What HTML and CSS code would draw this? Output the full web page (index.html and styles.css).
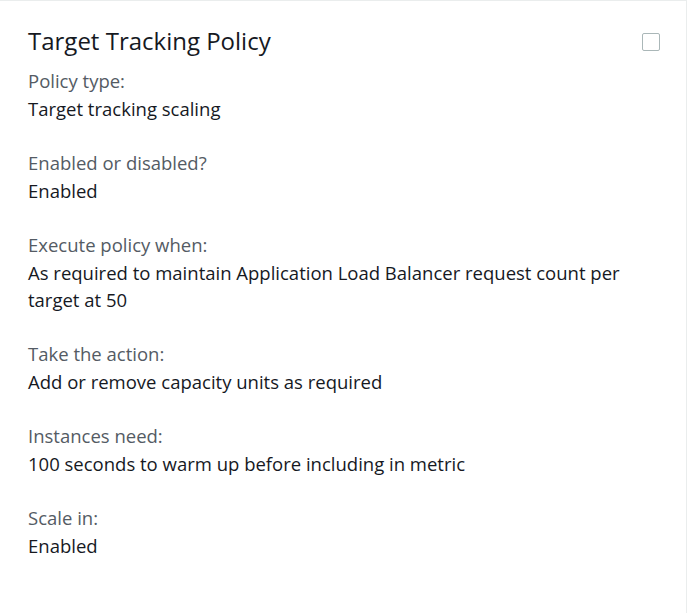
FILE: index.html
```html
<!DOCTYPE html>
<html>
<head>
<meta charset="utf-8">
<link rel="stylesheet" href="styles.css">
</head>
<body>
<div class="card">
  <div class="header">
    <h2 class="title">Target Tracking Policy</h2>
    <span class="checkbox"></span>
  </div>
  <div class="field">
    <div class="label">Policy type:</div>
    <div class="value">Target tracking scaling</div>
  </div>
  <div class="field">
    <div class="label">Enabled or disabled?</div>
    <div class="value">Enabled</div>
  </div>
  <div class="field">
    <div class="label">Execute policy when:</div>
    <div class="value">As required to maintain Application Load Balancer request count per target at 50</div>
  </div>
  <div class="field">
    <div class="label">Take the action:</div>
    <div class="value">Add or remove capacity units as required</div>
  </div>
  <div class="field">
    <div class="label">Instances need:</div>
    <div class="value">100 seconds to warm up before including in metric</div>
  </div>
  <div class="field">
    <div class="label">Scale in:</div>
    <div class="value">Enabled</div>
  </div>
</div>
</body>
</html>
```
FILE: styles.css
```css
html, body {
  margin: 0;
  padding: 0;
  background: #ffffff;
}
body {
  font-family: "Open Sans", "Noto Sans", sans-serif;
  color: #16191f;
}
.card {
  width: 687px;
  height: 613px;
  box-sizing: border-box;
  border-top: 1px solid #eaeded;
  border-right: 1px solid #eaeded;
  padding: 24px 26px 0 28px;
}
.header {
  display: flex;
  justify-content: space-between;
  align-items: flex-start;
}
.title {
  margin: 0;
  font-size: 24px;
  font-weight: 400;
  line-height: 32px;
  color: #16191f;
}
.checkbox {
  width: 16px;
  height: 16px;
  border: 1px solid #aab7b8;
  border-radius: 2px;
  margin-top: 8px;
}
.field {
  margin-top: 10px;
  margin-bottom: 27px;
}
.field + .field {
  margin-top: 0;
}
.label {
  font-size: 18.5px;
  line-height: 28px;
  color: #545b64;
}
.value {
  font-size: 18.5px;
  line-height: 27px;
  color: #16191f;
}
```
